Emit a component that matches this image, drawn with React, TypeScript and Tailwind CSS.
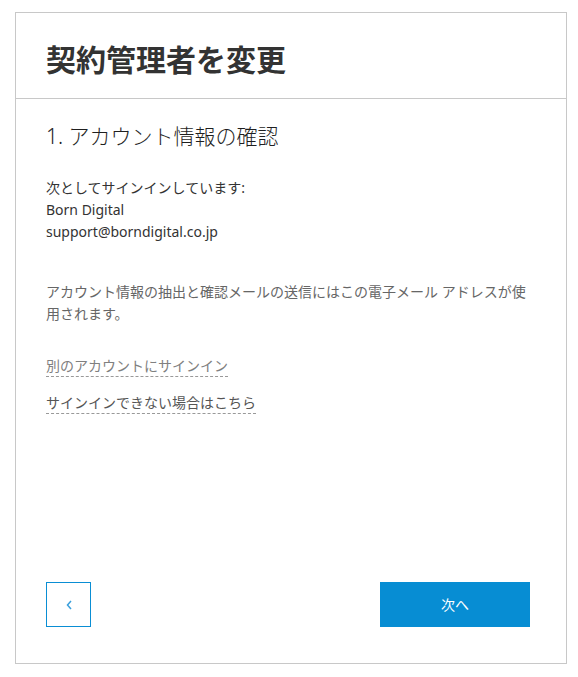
import React from 'react'

// Change contract manager – step 1 (account confirmation)

const FONT = { fontFamily: '"Noto Sans", "Noto Sans CJK JP", sans-serif' }

export default function App() {
  return (
    <div className="bg-white min-h-[677px] pt-[12px] pl-[15px]" style={FONT}>
      <div className="w-[552px] h-[652px] border border-[#c8c8c8] flex flex-col">
        {/* Header */}
        <div className="h-[86px] border-b border-[#c8c8c8] pl-[30px] pt-[27px]">
          <h1 className="text-[30px] leading-[40px] font-bold text-[#333]">契約管理者を変更</h1>
        </div>

        {/* Body */}
        <div className="flex-1 flex flex-col pl-[30px] pr-[36px] pt-[23px] pb-[36px]">
          <h2 className="text-[21px] leading-[28px] font-light text-[#1f1f1f]">1. アカウント情報の確認</h2>

          <div className="mt-[27px] text-[14px] leading-[22px] text-[#333]">
            <p>次としてサインインしています:</p>
            <p>Born Digital</p>
            <p>support@borndigital.co.jp</p>
          </div>

          <p className="mt-[38px] text-[14px] leading-[22px] text-[#666]">
            アカウント情報の抽出と確認メールの送信にはこの電子メール アドレスが使用されます。
          </p>

          <div className="mt-[31px] flex flex-col items-start gap-[16px] text-[14px] leading-[20px]">
            <a className="border-b border-dashed border-[#999] text-[#808080] cursor-pointer">別のアカウントにサインイン</a>
            <a className="border-b border-dashed border-[#999] text-[#555] cursor-pointer">サインインできない場合はこちら</a>
          </div>

          <div className="mt-auto flex items-center justify-between">
            <button className="w-[45px] h-[45px] border border-[#0a8ed4] flex items-center justify-center">
              <svg width="6" height="10" viewBox="0 0 6 10" fill="none">
                <polyline points="5,1 1.5,5 5,9" stroke="#3a9fdc" strokeWidth="1.5" />
              </svg>
            </button>
            <button className="w-[150px] h-[45px] bg-[#078dd3] text-white text-[14px]">次へ</button>
          </div>
        </div>
      </div>
    </div>
  )
}
